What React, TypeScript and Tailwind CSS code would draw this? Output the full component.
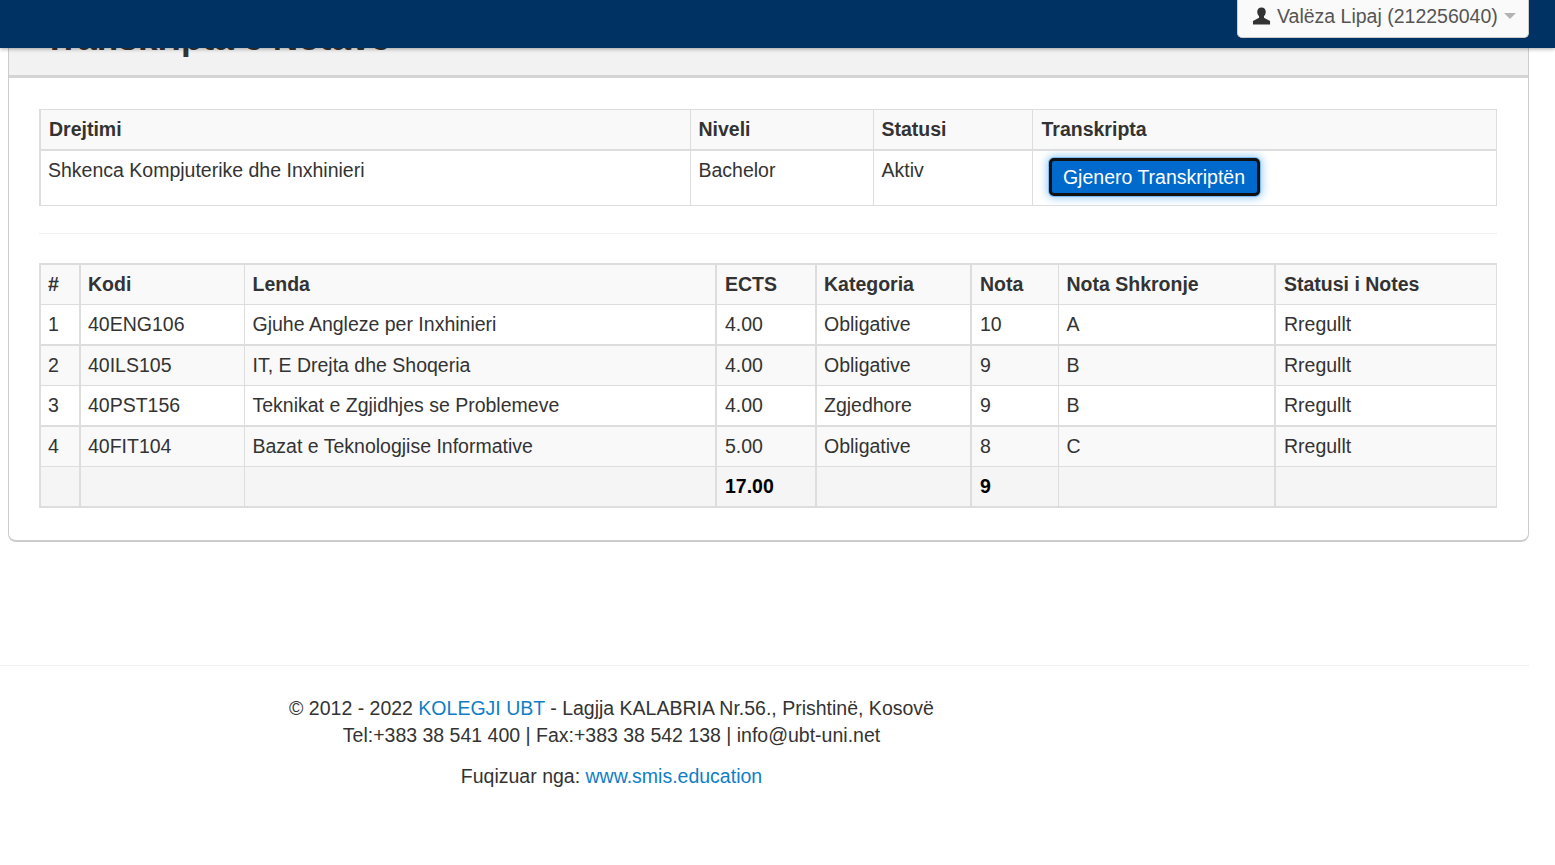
const courses = [
  ["1", "40ENG106", "Gjuhe Angleze per Inxhinieri", "4.00", "Obligative", "10", "A", "Rregullt"],
  ["2", "40ILS105", "IT, E Drejta dhe Shoqeria", "4.00", "Obligative", "9", "B", "Rregullt"],
  ["3", "40PST156", "Teknikat e Zgjidhjes se Problemeve", "4.00", "Zgjedhore", "9", "B", "Rregullt"],
  ["4", "40FIT104", "Bazat e Teknologjise Informative", "5.00", "Obligative", "8", "C", "Rregullt"],
];

const headers = ["#", "Kodi", "Lenda", "ECTS", "Kategoria", "Nota", "Nota Shkronje", "Statusi i Notes"];
const widths = ["w-[40px]", "w-[164px]", "w-[472px]", "w-[100px]", "w-[155px]", "w-[87px]", "w-[217px]", "w-[221px]"];
// columns whose left rule renders thicker in the reference
const thick = [
  "border-l-2 pl-[7px]",
  "border-l-2 pl-[7px]",
  "",
  "border-l-2",
  "border-l-2 pl-[7px]",
  "border-l-2",
  "",
  "border-l-2",
];

const cell = "border border-[#dddddd] px-2 text-left align-top pt-[5px]";

export default function App() {
  return (
    <div className="min-h-[865px] bg-white font-['Liberation_Sans',Arial,sans-serif] text-[19.5px] leading-[28px] text-[#333333]">
      <nav className="fixed inset-x-0 top-0 z-10 flex h-12 justify-end bg-[#003263] pr-[26px] shadow-[0_1px_4px_rgba(0,0,0,0.35)]">
        <button className="flex h-[38px] w-[292px] items-center rounded-b-[5px] border border-t-0 border-[#cccccc] bg-[#fafafa] pb-[5px] pl-[14px] text-[#555555]">
          <svg viewBox="0 0 20 20" className="mr-[6px] h-[20px] w-[19px] fill-[#333333]">
            <path d="M10 1c-3 0-4.500 2-4.500 4.600 0 2 .8 3.600 1.900 4.700v1.600L1 15.200V19h18v-3.800l-6.400-3.300v-1.600c1.100-1.100 1.900-2.700 1.900-4.700C14.500 3 13 1 10 1z" />
          </svg>
          Valëza Lipaj (212256040)
          <span className="ml-[6px] h-0 w-0 border-x-[6px] border-t-[6px] border-x-transparent border-t-[#b3b3b3]" />
        </button>
      </nav>

      <main className="px-2">
        <section className="w-[1521px] rounded-b-[8px] border border-t-0 border-b-2 border-[#cccccc]">
          <div className="h-[78px] overflow-hidden border-b-[3px] border-[#d4d4d4] bg-[#f2f2f2] pl-[35px] pt-[18px]">
            <h2 className="text-[35.200px] font-bold leading-[40px]">Transkripta e Notave</h2>
          </div>
          <div className="px-[30px] pb-[32px] pt-[31px]">
            <table className="w-[1458px] table-fixed border-collapse">
              <thead>
                <tr className="h-[40px] bg-[#f9f9f9]">
                  <th className={`${cell} w-[650px] border-b-2 border-l-2`}>Drejtimi</th>
                  <th className={`${cell} w-[183px] border-b-2`}>Niveli</th>
                  <th className={`${cell} w-[159px] border-b-2`}>Statusi</th>
                  <th className={`${cell} border-b-2 pl-[9px]`}>Transkripta</th>
                </tr>
              </thead>
              <tbody>
                <tr className="h-[56px]">
                  <td className={`${cell} border-l-2 pl-[7px] pt-[4px]`}>Shkenca Kompjuterike dhe Inxhinieri</td>
                  <td className={`${cell} pt-[4px]`}>Bachelor</td>
                  <td className={`${cell} pt-[4px]`}>Aktiv</td>
                  <td className={`${cell} pl-[16px] pt-[7px]`}>
                    <button className="block h-[38px] w-[211px] rounded-[5px] border-[3px] border-[#111111] bg-[#0069cc] text-white shadow-[0_0_0_1px_#7cbcf5,0_0_8px_2px_rgba(82,168,236,0.6)]">
                      Gjenero Transkriptën
                    </button>
                  </td>
                </tr>
              </tbody>
            </table>

            <hr className="mb-[29px] mt-[27px] w-[1458px] border-[#eeeeee]" />

            <table className="w-[1456px] table-fixed border-collapse">
              <thead>
                <tr className="h-[40px] bg-[#f9f9f9]">
                  {headers.map((h, i) => (
                    <th key={h} className={`${cell} ${widths[i]} ${thick[i]} border-t-2`}>{h}</th>
                  ))}
                </tr>
              </thead>
              <tbody>
                {courses.map((row, r) => (
                  <tr key={row[0]} className={`h-[40.500px] ${r % 2 === 1 ? "bg-[#f9f9f9]" : ""}`}>
                    {row.map((c, i) => (
                      <td key={i} className={`${cell} ${thick[i]} pt-[4px] ${r % 2 === 1 ? "border-t-2" : ""}`}>{c}</td>
                    ))}
                  </tr>
                ))}
                <tr className="h-[41px] bg-[#f5f5f5] font-bold text-black">
                  {["", "", "", "17.00", "", "9", "", ""].map((c, i) => (
                    <td key={i} className={`${cell} ${thick[i]} border-b-2 pt-[4px]`}>{c}</td>
                  ))}
                </tr>
              </tbody>
            </table>
          </div>
        </section>
      </main>

      <footer className="mt-[123px] w-[1529px] border-t border-[#eeeeee] pt-[29px]">
        <div className="w-[1223px] text-center leading-[27px]">
          <p>
            © 2012 - 2022 <a className="text-[#0f7ec6]">KOLEGJI UBT</a> - Lagjja KALABRIA Nr.56., Prishtinë, Kosovë
          </p>
          <p>Tel:+383 38 541 400 | Fax:+383 38 542 138 | info@ubt-uni.net</p>
          <p className="mt-[14px]">
            Fuqizuar nga: <a className="text-[#0f7ec6]">www.smis.education</a>
          </p>
        </div>
      </footer>
    </div>
  );
}
